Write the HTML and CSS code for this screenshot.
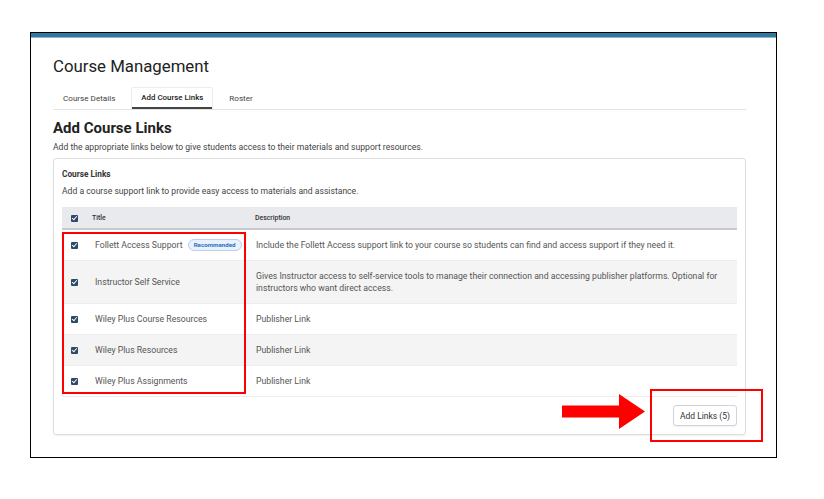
FILE: index.html
```html
<!DOCTYPE html>
<html>
<head>
<meta charset="utf-8">
<link rel="stylesheet" href="styles.css">
</head>
<body>
<div class="frame">
  <div class="topbar"></div>
  <div class="content">
    <h1 class="page-title">Course Management</h1>
    <div class="tabs">
      <div class="tab">Course Details</div>
      <div class="tab active">Add Course Links</div>
      <div class="tab">Roster</div>
    </div>
    <h2 class="section-title">Add Course Links</h2>
    <p class="section-sub">Add the appropriate links below to give students access to their materials and support resources.</p>
    <div class="card">
      <div class="card-title">Course Links</div>
      <div class="card-sub">Add a course support link to provide easy access to materials and assistance.</div>
      <table class="links">
        <colgroup>
          <col class="col-check">
          <col class="col-title">
          <col>
        </colgroup>
        <thead>
          <tr>
            <th class="c-check"><span class="cb"></span></th>
            <th class="c-title">Title</th>
            <th class="c-desc">Description</th>
          </tr>
        </thead>
        <tbody>
          <tr>
            <td class="c-check"><span class="cb"></span></td>
            <td class="c-title">Follett Access Support <span class="badge">Recommended</span></td>
            <td class="c-desc">Include the Follett Access support link to your course so students can find and access support if they need it.</td>
          </tr>
          <tr class="alt">
            <td class="c-check"><span class="cb"></span></td>
            <td class="c-title">Instructor Self Service</td>
            <td class="c-desc">Gives Instructor access to self-service tools to manage their connection and accessing publisher platforms. Optional for instructors who want direct access.</td>
          </tr>
          <tr>
            <td class="c-check"><span class="cb"></span></td>
            <td class="c-title">Wiley Plus Course Resources</td>
            <td class="c-desc">Publisher Link</td>
          </tr>
          <tr class="alt">
            <td class="c-check"><span class="cb"></span></td>
            <td class="c-title">Wiley Plus Resources</td>
            <td class="c-desc">Publisher Link</td>
          </tr>
          <tr>
            <td class="c-check"><span class="cb"></span></td>
            <td class="c-title">Wiley Plus Assignments</td>
            <td class="c-desc">Publisher Link</td>
          </tr>
        </tbody>
      </table>
      <div class="card-footer">
        <button class="btn">Add Links (5)</button>
      </div>
    </div>
  </div>
  <div class="mark mark-titles"></div>
  <div class="mark mark-button"></div>
  <svg class="arrow" width="83" height="36" viewBox="0 0 83 36">
    <polygon points="0,11.5 57,11.5 57,0 83,17.5 57,35 57,23.5 0,23.5" fill="#f00"/>
  </svg>
</div>
</body>
</html>
```

FILE: styles.css
```css
html, body {
  margin: 0;
  padding: 0;
  background: #fff;
}
body {
  font-family: Roboto, "Liberation Sans", Arial, sans-serif;
  color: #333;
}
.frame {
  position: relative;
  margin: 32px 0 0 30px;
  width: 745px;
  height: 424px;
  border: 1.5px solid #000;
  box-sizing: content-box;
}
.topbar {
  height: 4px;
  background: #2f789e;
  border-bottom: 1px solid #8fb5cb;
}
.content {
  padding: 17px 30px 0 22px;
}
.page-title {
  margin: 0;
  font-size: 16.8px;
  line-height: 22px;
  font-weight: 400;
  color: #222;
}
.tabs {
  display: flex;
  gap: 6px;
  margin-top: 10px;
  border-bottom: 1px solid #e4e4e4;
}
.tab {
  padding: 0 9px;
  height: 21px;
  line-height: 20px;
  font-size: 8.1px;
  color: #444;
  border: 1px solid transparent;
  border-bottom: 0;
}
.tab.active {
  font-size: 7.9px;
  font-weight: 500;
  color: #222;
  border-color: #ececec;
  border-radius: 2px 2px 0 0;
  box-shadow: inset 0 -2px 0 #444;
}
.section-title {
  margin: 9px 0 0;
  font-size: 15px;
  line-height: 19px;
  font-weight: 700;
  color: #222;
}
.section-sub {
  margin: 3px 0 0;
  font-size: 8.6px;
  line-height: 12px;
  color: #444;
}
.card {
  margin-top: 5px;
  border: 1px solid #dedede;
  border-radius: 3px;
  padding: 9px 8px 8px;
  box-shadow: 0 1px 1px rgba(0,0,0,0.06);
}
.card-title {
  font-size: 8.3px;
  line-height: 12px;
  font-weight: 700;
  color: #333;
}
.card-sub {
  margin-top: 5px;
  font-size: 8.6px;
  line-height: 12px;
  color: #444;
}
.links {
  margin-top: 10px;
  width: 100%;
  border-collapse: collapse;
  table-layout: fixed;
  font-size: 8.7px;
}
.col-check { width: 25px; }
.col-title { width: 160px; }
.links th {
  background: #e9eaed;
  border-bottom: 2px solid #c8c9cc;
  font-size: 6.9px;
  font-weight: 500;
  color: #333;
  text-align: left;
  padding: 6px 8px 5px;
  line-height: 10px;
}
.links td {
  padding: 9px 9px;
  line-height: 12px;
  color: #555;
  border-bottom: 1px solid #ededed;
  vertical-align: middle;
}
.links tr.alt td {
  background: #f4f4f4;
}
.links .c-check {
  padding-left: 8.5px;
  padding-right: 0;
}
.links th.c-title {
  padding-left: 5px;
}
.links td.c-title {
  padding-left: 8px;
  padding-right: 0;
  white-space: nowrap;
}
.links th.c-desc {
  padding-left: 8px;
}
.links td.c-desc {
  padding-left: 9px;
  padding-right: 8px;
}
.cb {
  display: block;
  width: 7px;
  height: 7px;
  border-radius: 1px;
  background: #2e4a66;
  position: relative;
}
.cb::after {
  content: "";
  position: absolute;
  left: 2.2px;
  top: 0.6px;
  width: 2px;
  height: 3.8px;
  border: solid #fff;
  border-width: 0 1px 1px 0;
  transform: rotate(40deg);
}
.badge {
  display: inline-block;
  margin-left: 3px;
  padding: 0 5px;
  height: 10px;
  line-height: 10px;
  font-size: 6.2px;
  font-weight: 700;
  color: #2d6fc0;
  background: #e9f1fc;
  border: 1px solid #b8d0ef;
  border-radius: 6px;
  vertical-align: 1px;
}
.card-footer {
  display: flex;
  justify-content: flex-end;
  padding-top: 8px;
}
.btn {
  font-family: inherit;
  font-size: 8.5px;
  color: #333;
  background: #fff;
  border: 1px solid #cfd4da;
  border-radius: 3px;
  height: 21px;
  padding: 0 6px;
  box-shadow: 0 1px 1px rgba(0,0,0,0.05);
}
.mark {
  position: absolute;
  border: 2px solid #f00;
  box-sizing: border-box;
}
.mark-titles {
  left: 31px;
  top: 199px;
  width: 184px;
  height: 162px;
}
.mark-button {
  left: 619px;
  top: 356px;
  width: 113px;
  height: 53px;
}
.arrow {
  position: absolute;
  left: 531px;
  top: 361px;
}
```
